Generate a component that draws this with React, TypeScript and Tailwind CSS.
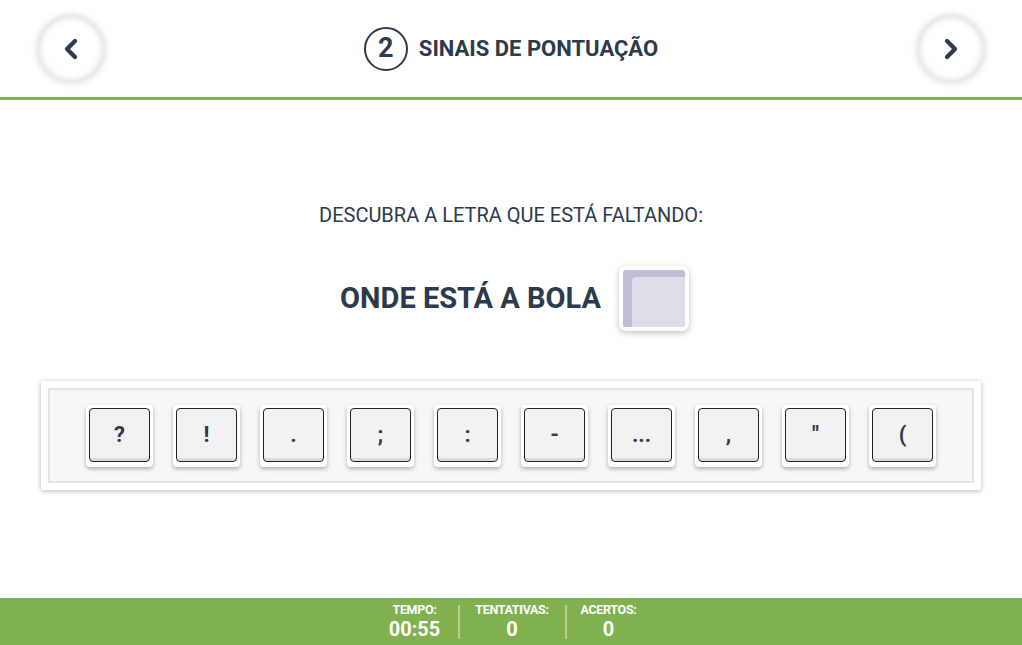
import { ChevronLeft, ChevronRight } from "lucide-react";

const keys = ["?", "!", ".", ";", ":", "-", "...", ",", "\"", "("];

function NavButton({ dir }: { dir: "left" | "right" }) {
  return (
    <button className="w-[66px] h-[66px] rounded-full bg-white flex items-center justify-center shadow-[0_0_6px_2px_rgba(0,0,0,0.12),inset_0_0_6px_2px_rgba(0,0,0,0.12)]">
      {dir === "left" ? (
        <ChevronLeft size={32} strokeWidth={3.2} className="text-[#2c3a4b]" />
      ) : (
        <ChevronRight size={32} strokeWidth={3.2} className="text-[#2c3a4b]" />
      )}
    </button>
  );
}

function Stat({ label, value, w }: { label: string; value: string; w: string }) {
  return (
    <div className={`flex flex-col items-center leading-none ${w}`}>
      <span className="text-[12.5px] font-bold tracking-tight">{label}</span>
      <span className="text-[20px] font-bold mt-[2px]">{value}</span>
    </div>
  );
}

export default function App() {
  return (
    <div className="w-[1022px] h-[645px] bg-white flex flex-col text-[#2c3a4b] font-['Roboto',sans-serif] overflow-hidden">
      <header className="h-[100px] flex items-center justify-between px-[38px] border-b-[3px] border-[#81b04f] shrink-0">
        <NavButton dir="left" />
        <div className="flex items-center gap-[11px]">
          <div className="w-[44px] h-[44px] rounded-full border-2 border-[#2c3a4b] flex items-center justify-center text-[27px] font-bold">
            2
          </div>
          <h1 className="text-[22px] font-bold">SINAIS DE PONTUAÇÃO</h1>
        </div>
        <NavButton dir="right" />
      </header>

      <main className="flex-1 flex flex-col items-center">
        <p className="mt-[102px] text-[20px] leading-[26px]">DESCUBRA A LETRA QUE ESTÁ FALTANDO:</p>
        <div className="mt-[38px] ml-[7px] flex items-center gap-[18px]">
          <span className="text-[29px] font-bold">ONDE ESTÁ A BOLA</span>
          <div className="w-[70px] h-[65px] rounded-[7px] bg-white p-[4px] shadow-[0_2px_6px_rgba(0,0,0,0.25)]">
            <div className="w-full h-full rounded-[3px] bg-[#c0bcd5] pt-[7px] pl-[9px]">
              <div className="w-full h-full rounded-tl-[4px] rounded-br-[2px] bg-[#dedce7]" />
            </div>
          </div>
        </div>

        <div className="mt-[50px] w-[940px] bg-white p-[7px] rounded-[2px] shadow-[0_1px_5px_rgba(0,0,0,0.3)]">
          <div className="border-2 border-[#e2e2e2] bg-[#f7f7f7] h-[95px] flex items-center justify-center gap-[20px]">
            {keys.map((k) => (
              <div
                key={k}
                className="w-[67px] h-[62px] bg-white rounded-[4px] pt-[3px] px-[3px] pb-[5px] shadow-[0_2px_4px_rgba(0,0,0,0.3)]"
              >
                <div className="w-full h-full rounded-[4px] border border-[#2a1f1a] bg-[#f2f2f2] shadow-[inset_0_-3px_0_#dcdcdc] flex items-center justify-center text-[22px] font-bold">
                  {k}
                </div>
              </div>
            ))}
          </div>
        </div>
      </main>

      <footer className="h-[47px] bg-[#81b04f] text-white flex items-center justify-center shrink-0">
        <Stat label="TEMPO:" value="00:55" w="w-[86px]" />
        <div className="w-[2px] h-[34px] bg-[#b3d08f]" />
        <Stat label="TENTATIVAS:" value="0" w="w-[105px]" />
        <div className="w-[2px] h-[34px] bg-[#b3d08f]" />
        <Stat label="ACERTOS:" value="0" w="w-[84px]" />
      </footer>
    </div>
  );
}
